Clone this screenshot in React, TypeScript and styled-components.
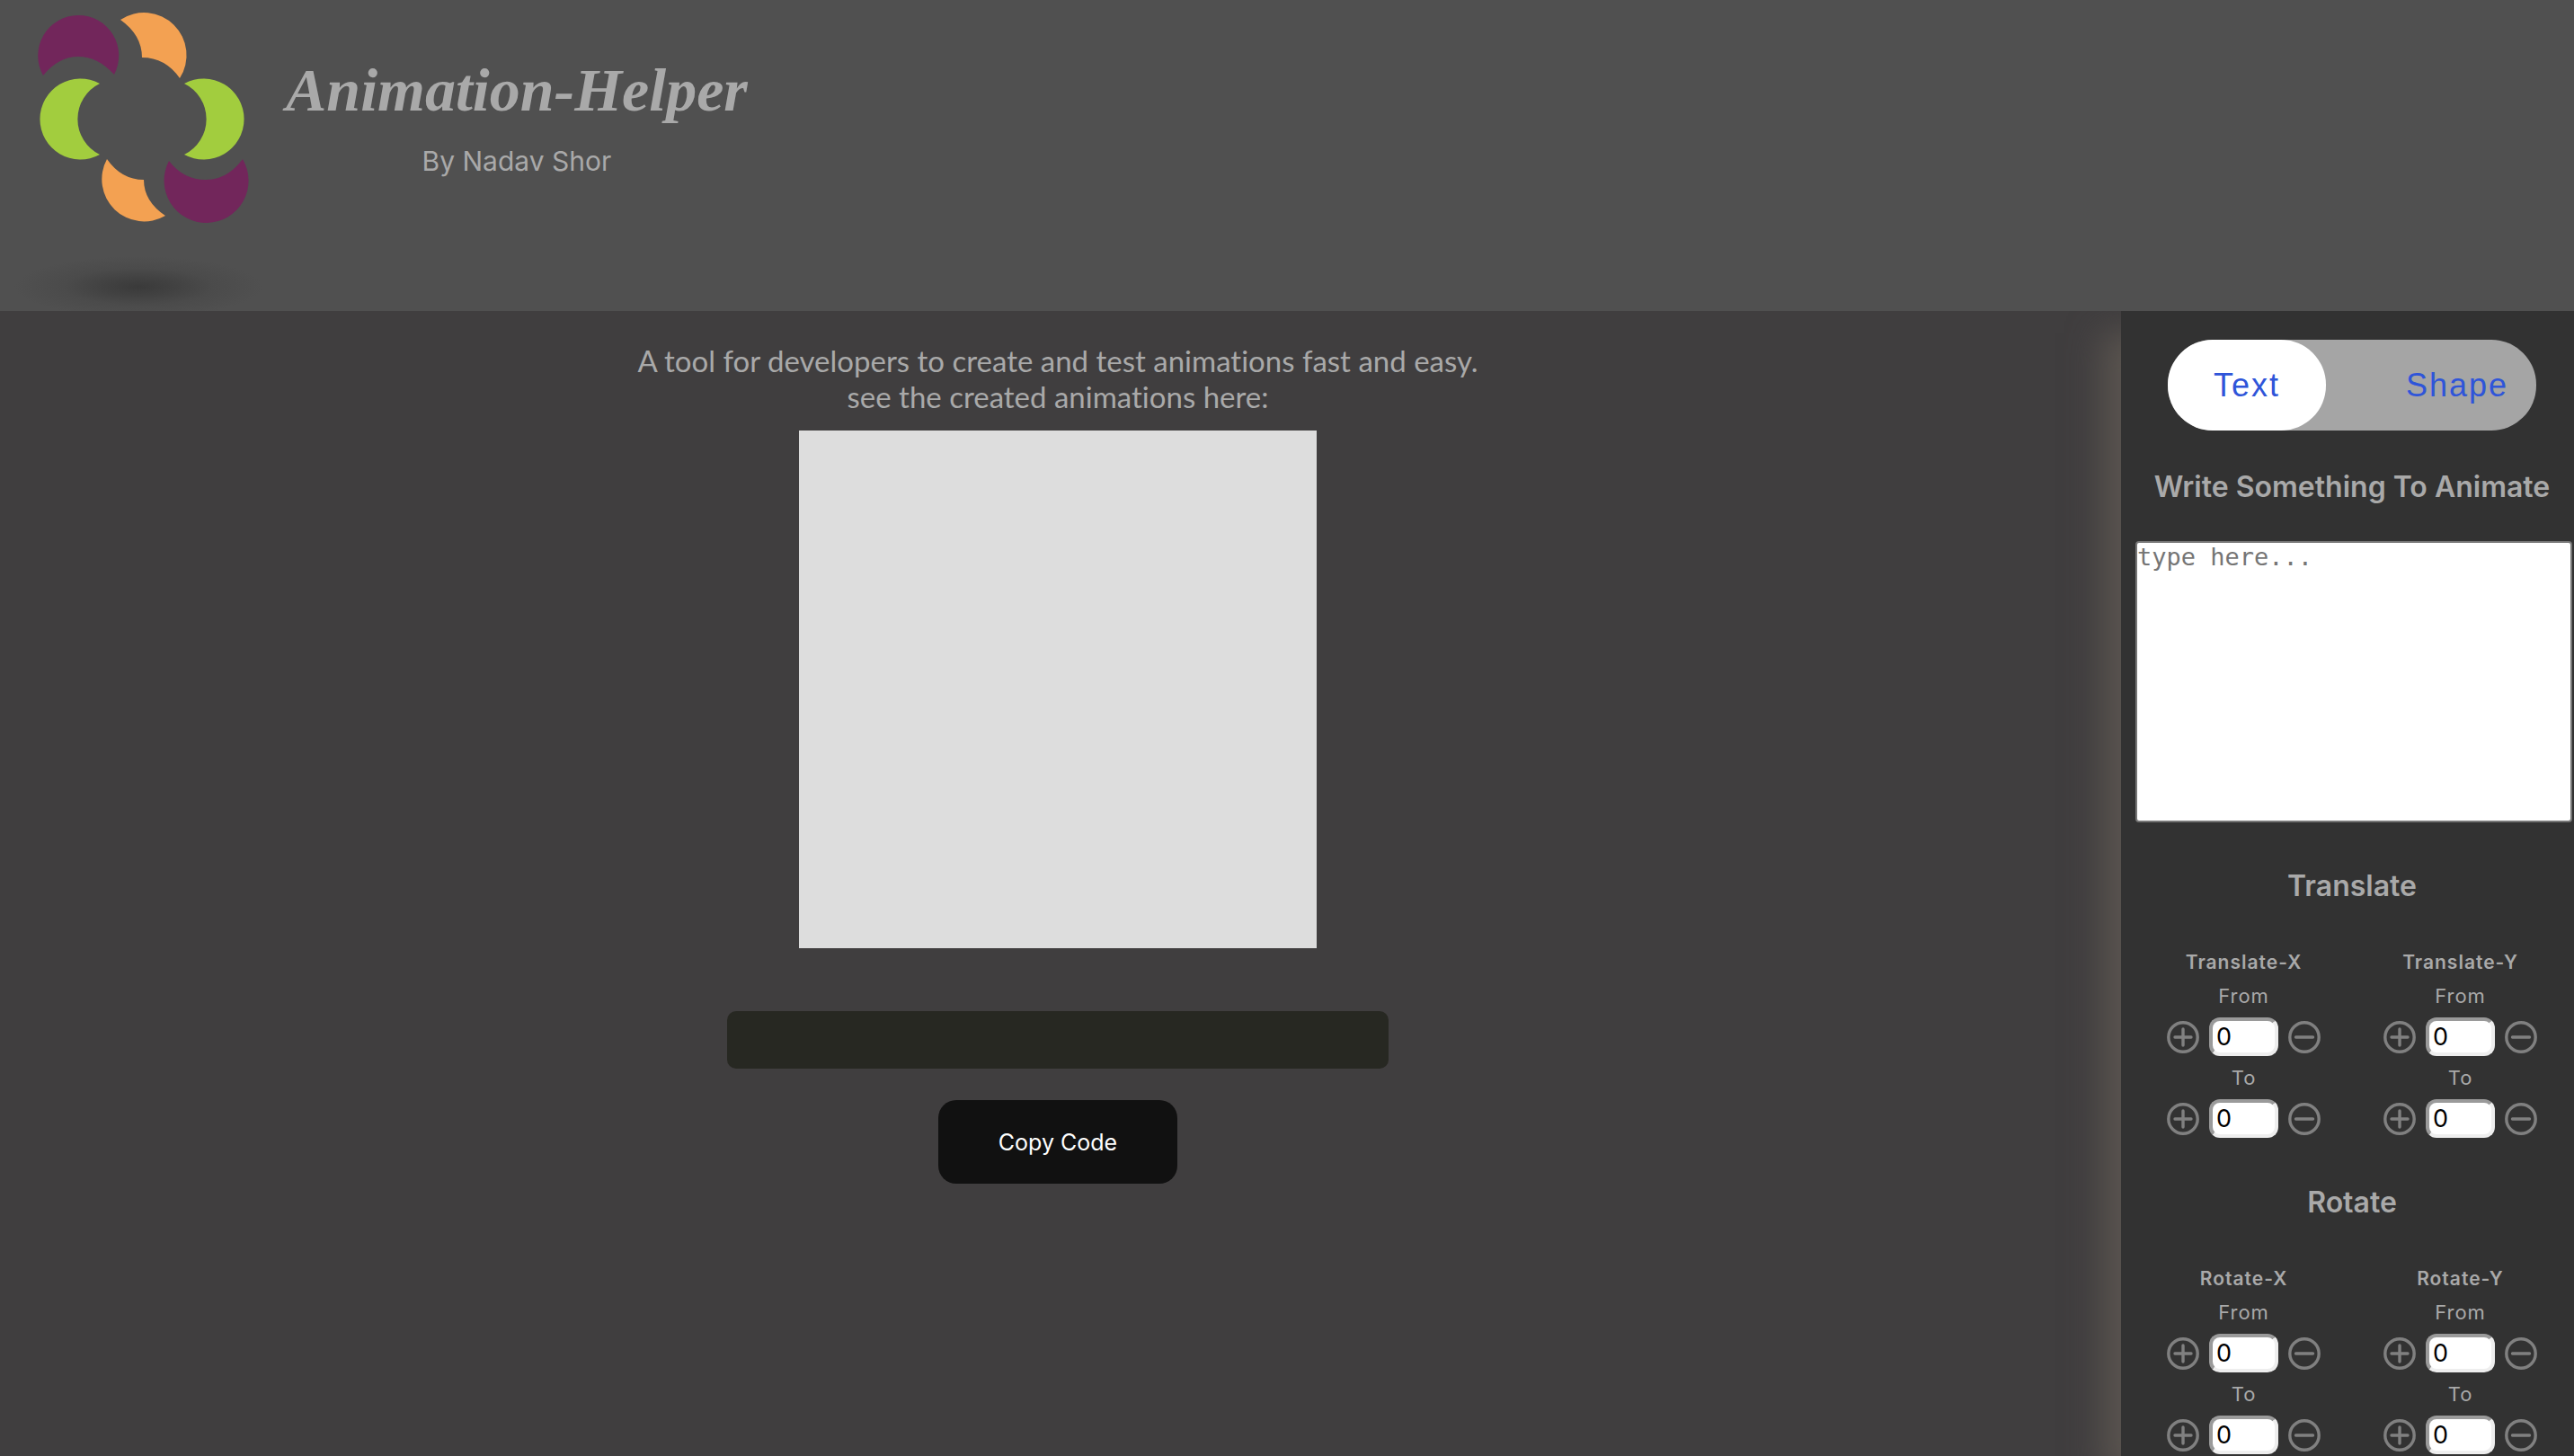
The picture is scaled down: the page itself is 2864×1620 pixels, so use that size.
import React, { useState } from "react";
import styled, { createGlobalStyle } from "styled-components";

const GlobalStyle = createGlobalStyle`
  *, *::before, *::after { box-sizing: border-box; }
  body {
    margin: 0;
    background: #403e3f;
    color: #a9a9a9;
    font-family: Inter, "Liberation Sans", sans-serif;
  }
`;

const Page = styled.div`
  height: 100vh;
  display: flex;
  flex-direction: column;
  overflow: hidden;
`;

const Header = styled.header`
  position: relative;
  z-index: 1;
  flex: none;
  display: flex;
  align-items: flex-start;
  height: 346px;
  background: #505050;
`;

const Logo = styled.svg`
  flex: none;
  width: 312px;
  height: 346px;
`;

const Brand = styled.div`
  display: flex;
  flex-direction: column;
  align-items: center;
  padding: 60px 6px 0;
`;

const Title = styled.h1`
  margin: 0;
  font: italic 700 68px/80px "Liberation Serif", serif;
`;

const Byline = styled.p`
  margin: 19px 0 0;
  font-size: 30px;
  line-height: 40px;
`;

const Body = styled.div`
  flex: 1;
  min-height: 0;
  display: grid;
  grid-template-columns: minmax(0, 1fr) 504px;
`;

const Main = styled.main`
  display: flex;
  flex-direction: column;
  align-items: center;
  padding: 35px 6px 0 0;
`;

const Intro = styled.p`
  margin: 0 0 18px;
  font-family: Lato, sans-serif;
  font-size: 33px;
  font-variant-ligatures: none;
  line-height: 40px;
  text-align: center;
`;

const Preview = styled.section`
  flex: none;
  width: 576px;
  height: 576px;
  background: #ddd;
`;

const CodeBlock = styled.pre`
  flex: none;
  width: 736px;
  height: 64px;
  margin: 70px 0 35px;
  border-radius: 10px;
  background: #272822;
`;

const CopyButton = styled.button`
  height: 93px;
  padding: 0 67px;
  border: 0;
  border-radius: 20px;
  background: #111;
  color: #fff;
  font: 400 25px/32px Inter, sans-serif;
`;

const Sidebar = styled.aside`
  display: flex;
  flex-direction: column;
  align-items: center;
  padding: 32px 0 0 10px;
  overflow: hidden;
  background: #323232;
  box-shadow: -20px 24px 36px 0 #5b5550;
`;

const Toggle = styled.div`
  flex: none;
  display: flex;
  justify-content: space-between;
  width: 410px;
  height: 101px;
  border-radius: 50px;
  background: #a5a5a5;
`;

const ToggleOption = styled.button<{ $active: boolean }>`
  width: 176px;
  border: 0;
  border-radius: 50px;
  background: ${(p) => (p.$active ? "#fff" : "transparent")};
  color: #2f55d9;
  font: 400 36px/40px "Liberation Sans", sans-serif;
  letter-spacing: 2px;
`;

const SectionTitle = styled.h2`
  margin: 0;
  font-size: 32px;
  font-weight: 600;
  line-height: 40px;
  text-align: center;
`;

const TextLabel = styled.label`
  margin: 43px 0 40px;
  font-size: 32px;
  font-weight: 600;
  line-height: 40px;
  white-space: nowrap;
`;

const TextBox = styled.textarea`
  flex: none;
  align-self: stretch;
  height: 313px;
  margin: 0 2px 51px 6px;
  padding: 0;
  border: 2px solid #767676;
  border-radius: 4px;
  background: #fff;
  font: 400 27px/31px "DejaVu Sans Mono", monospace;
  resize: none;
  &::placeholder { color: #757575; }
`;

const Group = styled.section`
  flex: none;
  display: flex;
  flex-direction: column;
  gap: 52px;
  margin-bottom: 52px;
`;

const Columns = styled.div`
  display: flex;
  gap: 70px;
`;

const Axis = styled.fieldset`
  display: flex;
  flex-direction: column;
  align-items: center;
  min-width: 0;
  margin: 0;
  padding: 0;
  border: 0;
`;

const AxisTitle = styled.legend`
  padding: 0;
  margin: 0 auto;
  font-size: 21px;
  font-weight: 600;
  line-height: 26px;
  letter-spacing: 1px;
`;

const StepLabel = styled.label`
  margin: 10px 0;
  font-size: 22px;
  line-height: 28px;
  letter-spacing: 1px;
`;

const Stepper = styled.div`
  display: flex;
  align-items: center;
  gap: 11px;
`;

const RoundButton = styled.button`
  display: flex;
  padding: 0;
  border: 0;
  background: none;
  color: #808080;
`;

const NumberBox = styled.input`
  width: 77px;
  height: 43px;
  padding: 0 4px;
  border: 4px solid;
  border-color: #9a9a9a #eee #eee #9a9a9a;
  border-radius: 12px;
  background: #fff;
  color: #000;
  font: 400 27px/32px Inter, sans-serif;
`;

const CircleIcon = ({ plus }: { plus?: boolean }) => (
  <svg width="36" height="36" viewBox="0 0 36 36" fill="none" stroke="currentColor" strokeWidth="3.4" strokeLinecap="round">
    <circle cx="18" cy="18" r="16.2" />
    <path d={plus ? "M9 18H27M18 9V27" : "M8.500 18H27.500"} />
  </svg>
);

const Field = ({ id, label }: { id: string; label: string }) => {
  const [value, setValue] = useState(0);
  return (
    <>
      <StepLabel htmlFor={id}>{label}</StepLabel>
      <Stepper>
        <RoundButton type="button" aria-label="Increase" onClick={() => setValue(value + 1)}>
          <CircleIcon plus />
        </RoundButton>
        <NumberBox id={id} value={value} onChange={(e) => setValue(Number(e.target.value) || 0)} />
        <RoundButton type="button" aria-label="Decrease" onClick={() => setValue(value - 1)}>
          <CircleIcon />
        </RoundButton>
      </Stepper>
    </>
  );
};

const TransformGroup = ({ name }: { name: string }) => (
  <Group>
    <SectionTitle>{name}</SectionTitle>
    <Columns>
      {["X", "Y"].map((axis) => (
        <Axis key={axis}>
          <AxisTitle>{`${name}-${axis}`}</AxisTitle>
          <Field id={`${name}-${axis}-from`} label="From" />
          <Field id={`${name}-${axis}-to`} label="To" />
        </Axis>
      ))}
    </Columns>
  </Group>
);

const LogoMark = () => (
  <Logo viewBox="0 0 312 346" aria-hidden="true">
    <defs>
      <radialGradient id="shadow">
        <stop offset="0" stopColor="#3a3a3a" />
        <stop offset="0.3" stopColor="#424242" />
        <stop offset="0.6" stopColor="#4b4b4b" />
        <stop offset="1" stopColor="#505050" />
      </radialGradient>
    </defs>
    <path fill="#72265b" d="M48 84A45 45 0 1 1 127 83Q109 63 87 63Q65 63 48 84Z" />
    <path fill="#f3a152" d="M134 22A47.300 47.300 0 0 1 200 87Q184 64 158 64Q158 39 134 22Z" />
    <path fill="#a2cd3e" d="M111 93A45 45 0 1 0 111 172A44 44 0 0 1 111 93Z" />
    <path fill="#a2cd3e" d="M205 93A45 45 0 1 1 205 172A44 44 0 0 0 205 93Z" />
    <path fill="#f3a152" d="M119 177A47 47 0 0 0 184 240Q160 224 160 200Q135 200 119 177Z" />
    <path fill="#72265b" d="M188 179A47 47 0 1 0 270 177Q253 200 229 200Q204 200 188 179Z" />
    <ellipse cx="154" cy="319" rx="138" ry="34" fill="url(#shadow)" />
  </Logo>
);

export default function App() {
  const [mode, setMode] = useState("Text");
  return (
    <>
      <GlobalStyle />
      <Page>
        <Header>
          <LogoMark />
          <Brand>
            <Title>Animation-Helper</Title>
            <Byline>By Nadav Shor</Byline>
          </Brand>
        </Header>
        <Body>
          <Main>
            <Intro>
              A tool for developers to create and test animations fast and easy.
              <br />
              see the created animations here:
            </Intro>
            <Preview />
            <CodeBlock />
            <CopyButton type="button">Copy Code</CopyButton>
          </Main>
          <Sidebar>
            <Toggle>
              {["Text", "Shape"].map((m) => (
                <ToggleOption key={m} type="button" $active={m === mode} onClick={() => setMode(m)}>
                  {m}
                </ToggleOption>
              ))}
            </Toggle>
            <TextLabel htmlFor="source">Write Something To Animate</TextLabel>
            <TextBox id="source" placeholder="type here..." />
            <TransformGroup name="Translate" />
            <TransformGroup name="Rotate" />
          </Sidebar>
        </Body>
      </Page>
    </>
  );
}
